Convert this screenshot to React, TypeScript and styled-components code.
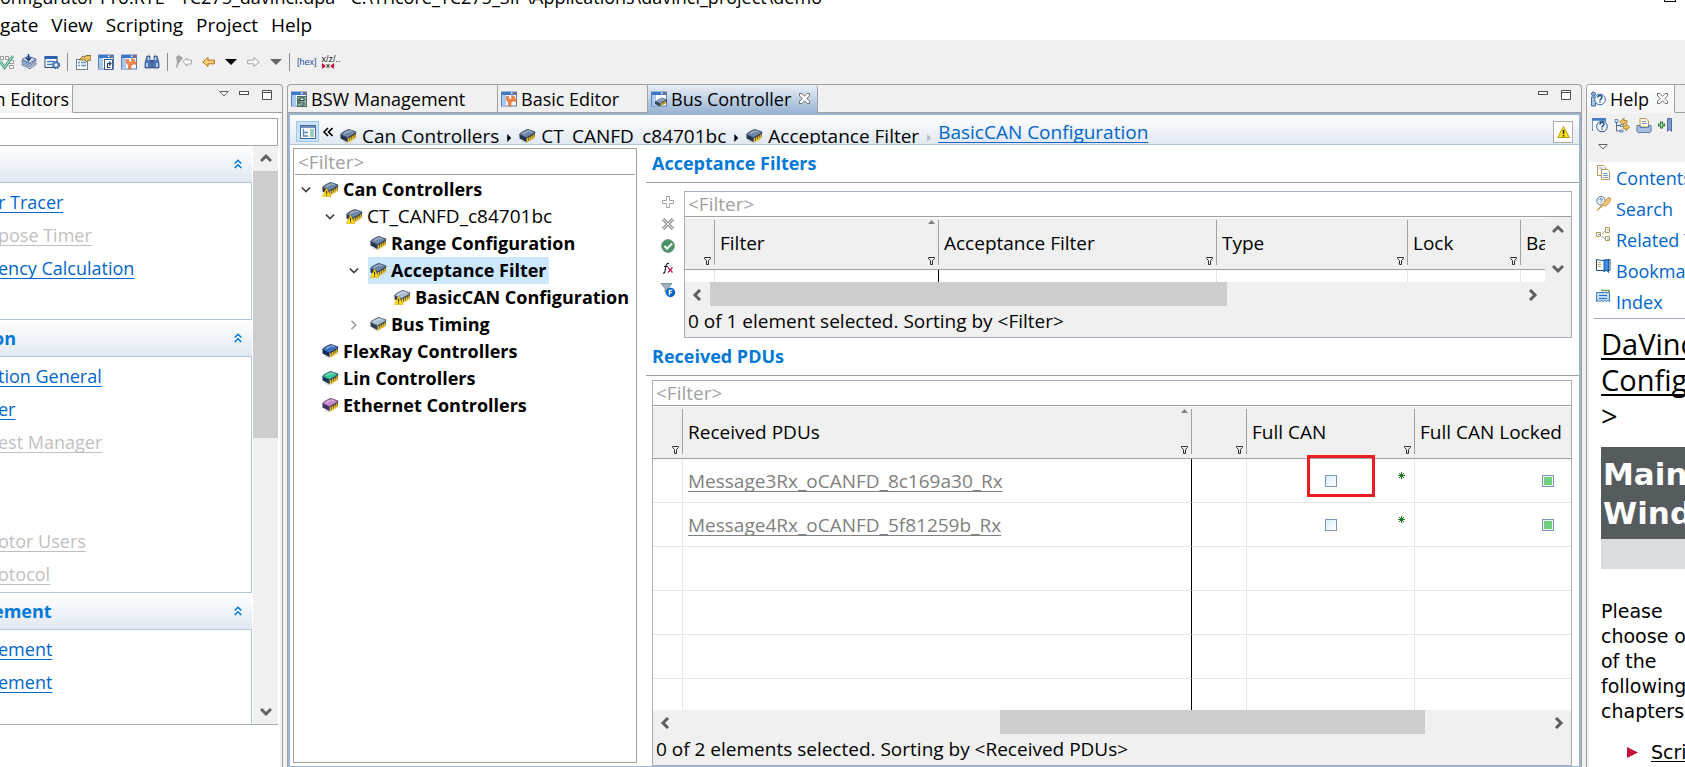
import React from 'react';
import styled, { createGlobalStyle, css } from 'styled-components';

const GlobalStyle = createGlobalStyle`
  * { box-sizing: border-box; }
  body { margin: 0; background: #f0f0f0; }
  body, button, input, table {
    font-family: "Open Sans", "Noto Sans", sans-serif;
    font-size: 19px;
    line-height: 24px;
    color: #000;
  }
  button { padding: 0; border: 0; background: none; display: flex; align-items: center; justify-content: center; }
  svg { display: block; flex: none; }
  h2, h3, p, ul { margin: 0; padding: 0; font-weight: inherit; }
  ul { list-style: none; }
`;

/* ---------- window ---------- */

const Window = styled.div`
  display: flex;
  flex-direction: column;
  height: 100vh;
  overflow: hidden;
  background: #f0f0f0;
`;
const TitleBar = styled.header`
  display: flex;
  align-items: flex-end;
  justify-content: space-between;
  height: 9px;
  padding-right: 9px;
  background: #fff;
  font-size: 18px;
  overflow: hidden;
  white-space: nowrap;
`;
const MaximizeButton = styled.button`
  width: 12px;
  height: 12px;
  margin-bottom: 7px;
  border: 1px solid #000;
`;
const MenuBar = styled.nav`
  display: flex;
  align-items: flex-start;
  gap: 13px;
  height: 31px;
  padding-top: 4px;
  background: #fff;
`;
const ToolBar = styled.div`
  display: flex;
  align-items: center;
  height: 44px;
`;
const ToolGroup = styled.div<{ $gap: number }>`
  display: flex;
  align-items: center;
  gap: ${p => p.$gap}px;
`;
const ToolSeparator = styled.span`
  width: 1px;
  height: 18px;
  margin: 0 7px;
  background: #8c8c8c;
`;
const Workbench = styled.main`
  flex: 1;
  min-height: 0;
  display: flex;
  gap: 4px;
`;

/* ---------- panels and tabs ---------- */

const PanelBox = styled.section`
  display: flex;
  flex-direction: column;
  min-width: 0;
  border-top: 1px solid #a0a0a0;
`;
const LeftPanel = styled(PanelBox)`
  width: 283px;
  flex: none;
  border-right: 1px solid #a0a0a0;
  border-top-right-radius: 4px;
`;
const EditorPanel = styled(PanelBox)`
  flex: 1;
  border-left: 1px solid #a0a0a0;
  border-right: 1px solid #a0a0a0;
  border-radius: 4px 4px 0 0;
`;
const HelpPanel = styled(PanelBox)`
  width: 99px;
  flex: none;
  overflow: hidden;
  border-left: 1px solid #a0a0a0;
  border-top-left-radius: 4px;
`;
const TabStrip = styled.div`
  display: flex;
  flex: none;
  height: 28px;
  white-space: nowrap;
`;
const Tab = styled.div<{ $active?: boolean; $plain?: boolean; $cut?: boolean; $wide: number }>`
  display: flex;
  align-items: center;
  justify-content: ${p => (p.$cut ? 'flex-end' : 'flex-start')};
  gap: 4px;
  width: ${p => p.$wide}px;
  height: 28px;
  padding: 0 3px;
  font-size: 18px;
  overflow: hidden;
  border-right: 1px solid #a0a0a0;
  border-bottom: 1px solid #a0a0a0;
  ${p => p.$active && css`
    background: linear-gradient(#e9eff6, #9bb5d3);
    border-bottom-color: #9bb5d3;
    border-top-right-radius: 3px;
  `}
  ${p => p.$plain && css`
    background: linear-gradient(#fff, #f6f6f6);
    border-bottom-color: #f6f6f6;
  `}
  & > button { margin-left: 4px; }
`;
const TabFill = styled.div`
  flex: 1;
  display: flex;
  justify-content: flex-end;
  gap: 13px;
  padding: 5px 10px 0 0;
  border-bottom: 1px solid #a0a0a0;
`;
const StripButton = styled.button<{ $low?: boolean; $menu?: boolean }>`
  align-items: flex-start;
  width: 10px;
  height: 10px;
  padding-top: ${p => (p.$low ? 1 : 0)}px;
  margin-right: ${p => (p.$menu ? -3 : 0)}px;
`;

/* ---------- scrollbars ---------- */

const ScrollTrack = styled.div<{ $vertical?: boolean }>`
  display: flex;
  flex: none;
  flex-direction: ${p => (p.$vertical ? 'column' : 'row')};
  ${p => (p.$vertical ? 'width: 25px;' : 'height: 24px;')}
  background: #f0f0f0;
  & > button { flex: none; width: 25px; height: 25px; }
`;
const ScrollRun = styled.span<{ $part: number; $thumb?: boolean }>`
  flex: ${p => p.$part} 1 0;
  background: ${p => (p.$thumb ? '#cdcdcd' : 'transparent')};
`;

type Dir = 'up' | 'down' | 'left' | 'right';
const chevrons: Record<Dir, string> = {
  up: 'M1 8 L6 3 L11 8', down: 'M1 3 L6 8 L11 3',
  left: 'M8 1 L3 6 L8 11', right: 'M3 1 L8 6 L3 11',
};
const Chevron = ({ dir, size = 12, color = '#606060', weight = 3 }: { dir: Dir; size?: number; color?: string; weight?: number }) => (
  <svg width={size} height={size} viewBox="0 0 12 12" fill="none" stroke={color} strokeWidth={weight}><path d={chevrons[dir]} /></svg>
);
const ScrollBar = ({ vertical, before, thumb, after }: { vertical?: boolean; before: number; thumb: number; after: number }) => (
  <ScrollTrack $vertical={vertical}>
    <button aria-label="Scroll back"><Chevron dir={vertical ? 'up' : 'left'} /></button>
    <ScrollRun $part={before} />
    <ScrollRun $part={thumb} $thumb />
    <ScrollRun $part={after} />
    <button aria-label="Scroll forward"><Chevron dir={vertical ? 'down' : 'right'} /></button>
  </ScrollTrack>
);

/* ---------- left panel ---------- */

const LeftBody = styled.div`
  flex: 1;
  min-height: 0;
  display: flex;
  flex-direction: column;
  margin-right: 2px;
  padding: 5px 2px 42px 0;
  background: #fff;
`;
const SearchBox = styled.input`
  width: 100%;
  height: 28px;
  flex: none;
  border: 1px solid #a0a4a8;
  border-left: 0;
  outline: 0;
`;
const OutlineArea = styled.div`
  flex: 1;
  min-height: 0;
  display: flex;
  gap: 1px;
  border-bottom: 1px solid #a5adb8;
`;
const OutlineList = styled.div`
  flex: 1;
  min-width: 0;
  overflow: hidden;
`;
const GroupHead = styled.h2`
  display: flex;
  align-items: center;
  justify-content: space-between;
  height: 37px;
  padding-right: 10px;
  border-bottom: 1px solid #b4c5db;
  background: linear-gradient(#fff, #e1e8f2);
  font-size: 18px;
  font-weight: 700;
  color: #0078d7;
  & > span { margin-left: -7px; }
`;
const GroupBody = styled.ul`
  padding-top: 4px;
  border-right: 1px solid #b4c5db;
  border-bottom: 1px solid #b4c5db;
  font-size: 18px;
  white-space: nowrap;
`;
const GroupItem = styled.li`
  height: 33px;
  margin-left: -2px;
  line-height: 31px;
`;
const TextLink = styled.a<{ $off?: boolean }>`
  color: ${p => (p.$off ? '#bfbfbf' : '#0066cc')};
  text-decoration: underline;
  text-underline-offset: 3px;
  text-decoration-thickness: 1px;
  text-decoration-skip-ink: none;
`;

type Entry = { text: string; off?: boolean } | null;
const groups: { title: string; items: Entry[] }[] = [
  { title: '', items: [{ text: 'r Tracer' }, { text: 'pose Timer', off: true }, { text: 'ency Calculation' }, null] },
  {
    title: 'on',
    items: [{ text: 'tion General' }, { text: 'er' }, { text: 'est Manager', off: true }, null, null, { text: 'otor Users', off: true }, { text: 'otocol', off: true }],
  },
  { title: 'ement', items: [{ text: 'ement' }, { text: 'ement' }, null] },
];

const DoubleUp = () => (
  <svg width="8" height="10" viewBox="0 0 8 10" fill="none" stroke="#0078d7" strokeWidth="1.5"><path d="M.7 4.5 4 1.2l3.3 3.3M.7 9 4 5.7 7.3 9" /></svg>
);

/* ---------- editor ---------- */

const EditorBody = styled.div`
  flex: 1;
  min-height: 0;
  display: flex;
  flex-direction: column;
  border: 2px solid #9bb5d3;
  border-bottom-width: 1px;
  background: #fff;
`;
const Breadcrumb = styled.nav`
  display: flex;
  flex: none;
  height: 30px;
  padding: 0 6px;
  border-bottom: 1px solid #b4c5db;
  background: linear-gradient(#fff, #e0e8f1);
  overflow: hidden;
  white-space: nowrap;
`;
const TreeToggle = styled.button`
  flex: none;
  width: 23px;
  height: 21px;
  margin-top: 6px;
  border: 1px solid #99c9f5;
  background: #cce4fb;
`;
const Crumb = styled.span`
  display: flex;
  align-items: center;
  gap: 5px;
  height: 24px;
  margin: 9px 8px 0 7px;
`;
const CrumbArrow = styled.span<{ $off?: boolean }>`
  margin: 19px 1px 0 0;
  width: 4px;
  height: 8px;
  background: ${p => (p.$off ? '#b8bcc2' : '#000')};
  clip-path: polygon(0 0, 100% 50%, 0 100%);
`;
const CrumbLink = styled(TextLink)`
  margin: 5px 0 0 6px;
`;
const WarnButton = styled.button`
  width: 20px;
  height: 22px;
  margin: 6px 0 0 auto;
  border: 1px solid #adadad;
  background: #fff;
`;
const Split = styled.div`
  flex: 1;
  min-height: 0;
  display: flex;
  gap: 9px;
`;
const TreePane = styled.aside`
  flex: none;
  width: 344px;
  margin: 3px 0 3px 3px;
  padding: 0 1px;
  border: 1px solid #a0a0a0;
`;
const FilterInput = styled.input`
  display: block;
  flex: none;
  width: 100%;
  height: 26px;
  padding: 0 3px;
  border: 0;
  border-bottom: 1px solid #a0a0a0;
  outline: 0;
  &::placeholder { color: #a0a0a0; opacity: 1; }
`;
const TreeList = styled.ul`
  padding-top: 1px;
`;
const TreeRow = styled.li<{ $level: number }>`
  display: flex;
  align-items: center;
  height: 27px;
  padding-left: ${p => p.$level * 24 + 5}px;
`;
const Expander = styled.button`
  width: 12px;
  height: 12px;
  margin-right: 8px;
`;
const TreeLabel = styled.span<{ $selected?: boolean; $bold?: boolean }>`
  display: flex;
  align-items: center;
  gap: 4px;
  height: 27px;
  padding: 0 2px 2px;
  background: ${p => (p.$selected ? '#cce8ff' : 'transparent')};
  font-size: ${p => (p.$bold ? 18 : 19)}px;
  font-weight: ${p => (p.$bold ? 700 : 400)};
  white-space: nowrap;
`;
const Detail = styled.div`
  flex: 1;
  min-width: 0;
  display: flex;
  flex-direction: column;
`;
const SectionTitle = styled.h2`
  flex: none;
  height: 38px;
  padding: 6px 0 0 6px;
  border-bottom: 1px solid #a0a0a0;
  font-size: 18px;
  font-weight: 700;
  color: #0078d7;
`;
const FilterSection = styled.div`
  display: flex;
  gap: 8px;
  padding: 8px 7px 0 14px;
`;
const SideTools = styled.div`
  display: flex;
  flex-direction: column;
  gap: 6px;
  padding-top: 3px;
  & > button { width: 16px; height: 16px; }
`;
const ReceivedSection = styled.div`
  flex: 1;
  min-height: 0;
  display: flex;
  padding: 4px 7px 0 6px;
`;
const TableBox = styled.div`
  flex: 1;
  min-width: 0;
  display: flex;
  flex-direction: column;
  border: 1px solid #a5b1be;
  background: #f0f0f0;
`;
const TableFilter = styled(FilterInput)`
  height: 25px;
`;
const TableView = styled.div`
  flex: 1;
  min-height: 0;
  min-width: 0;
  overflow: hidden;
  border-top: 1px solid #fff;
  background: #fff;
`;
const TableLine = styled.div`
  display: flex;
  height: 65px;
`;
const ArrowColumn = styled.div`
  display: flex;
  flex-direction: column;
  justify-content: space-between;
  width: 26px;
  & > button { width: 26px; height: 26px; }
`;
const ScrollLine = styled.div`
  padding-right: 26px;
`;
const Footer = styled.p`
  height: 31px;
  padding: 3px 3px 0;
`;
const Grid = styled.table`
  table-layout: fixed;
  border-collapse: separate;
  border-spacing: 0;
`;
const HeadCell = styled.th`
  height: 52px;
  padding: 2px 0 4px;
  border-bottom: 1px solid #a0a0a0;
  background: #f0f0f0;
  font-weight: 400;
  text-align: left;
`;
const HeadInner = styled.div<{ $open?: boolean }>`
  position: relative;
  display: flex;
  align-items: center;
  height: 45px;
  padding-left: 5px;
  border-right: ${p => (p.$open ? '0' : '1px solid #a0a0a0')};
  white-space: nowrap;
`;
const FunnelMark = styled.span`
  position: absolute;
  right: 3px;
  bottom: 0;
`;
const SortMark = styled.span`
  position: absolute;
  right: 3px;
  top: 0;
`;
const Cell = styled.td<{ $dark?: boolean; $center?: boolean }>`
  position: relative;
  height: 44px;
  padding: 0 5px;
  border-right: 1px solid ${p => (p.$dark ? '#000' : '#e6e6e6')};
  border-bottom: 1px solid #e6e6e6;
  text-align: ${p => (p.$center ? 'center' : 'left')};
  white-space: nowrap;
`;
const PduLink = styled(TextLink)`
  color: #808080;
`;
const Check = styled.input<{ $locked?: boolean }>`
  appearance: none;
  display: block;
  width: 12px;
  height: 12px;
  margin: 0 auto;
  border: 1px solid #7f93b5;
  background: linear-gradient(135deg, #d9effa, #fff);
  ${p => p.$locked && css`
    background: #70d080;
    box-shadow: inset 0 0 0 1px #e9f6fb;
  `}
`;
const Changed = styled.span`
  position: absolute;
  right: 9px;
  top: 13px;
`;
const Highlight = styled.span`
  position: absolute;
  left: 60px;
  top: -4px;
  width: 68px;
  height: 42px;
  border: 3px solid #ed1c24;
`;

const Funnel = () => (
  <svg width="7" height="8" viewBox="0 0 7 8" fill="none" stroke="#303030"><path d="M.5.5h6v1L4.500 3.500v4h-2v-4L.5 1.500z" /></svg>
);
const SortUp = () => (
  <svg width="7" height="4" viewBox="0 0 7 4"><path d="M3.500 0 7 4H0z" fill="#808080" /></svg>
);

type Column = { title: string; width: number; funnel?: boolean; sorted?: boolean; open?: boolean };
const filterColumns: Column[] = [
  { title: '', width: 30, funnel: true },
  { title: 'Filter', width: 224, funnel: true, sorted: true },
  { title: 'Acceptance Filter', width: 278, funnel: true },
  { title: 'Type', width: 191, funnel: true },
  { title: 'Lock', width: 113, funnel: true },
  { title: 'Base', width: 120, open: true },
];
const pduColumns: Column[] = [
  { title: '', width: 30, funnel: true },
  { title: 'Received PDUs', width: 509, funnel: true, sorted: true },
  { title: '', width: 55, funnel: true },
  { title: 'Full CAN', width: 168, funnel: true },
  { title: 'Full CAN Locked', width: 266, open: true },
];
const pdus = ['Message3Rx_oCANFD_8c169a30_Rx', 'Message4Rx_oCANFD_5f81259b_Rx'];

const GridHead = ({ columns }: { columns: Column[] }) => (
  <>
    <colgroup>{columns.map((c, i) => <col key={i} width={c.width} />)}</colgroup>
    <thead>
      <tr>
        {columns.map((c, i) => (
          <HeadCell key={i} scope="col">
            <HeadInner $open={c.open}>
              {c.title}
              {c.sorted && <SortMark><SortUp /></SortMark>}
              {c.funnel && <FunnelMark><Funnel /></FunnelMark>}
            </HeadInner>
          </HeadCell>
        ))}
      </tr>
    </thead>
  </>
);
const totalWidth = (columns: Column[]) => columns.reduce((sum, c) => sum + c.width, 0);

/* ---------- icons ---------- */

const chipTones = { can: ['#6f87a6', '#27344f'], steel: ['#a9bfcf', '#33415a'], flexray: ['#3f74bf', '#182a5c'], lin: ['#3cc79a', '#1c3550'], ethernet: ['#c58bcb', '#41305f'] };
type Tone = keyof typeof chipTones;
const Chip = ({ tone = 'can', warn }: { tone?: Tone; warn?: boolean }) => {
  const [top, side] = chipTones[tone];
  return (
    <svg width="17" height="16" viewBox="0 0 17 16">
      <path d="M2 13 7 15.500 16.500 10 15 9z" fill="#b9bcc0" opacity=".6" />
      <path d="M.5 6.500 7.500 9.500v4.500L.5 10.500z" fill={side} />
      <path d="M7.500 9.500 16 4.500v4L7.500 14z" fill="#514a35" />
      <path d="M.5 6.500C1 5 7 1.800 9 1.500l7 2.500v.8L7.500 9.800z" fill={top} stroke={side} strokeWidth=".8" />
      <path d="M4 5.500 9.500 2.800l3 1" stroke="#fff" strokeWidth="1.200" fill="none" opacity=".45" />
      <path d="M8.600 10v4.500M10.700 9v4.300M12.800 7.800v4.200M14.900 6.600v4" stroke="#f0c419" strokeWidth="1.300" />
      {warn && (
        <>
          <path d="M4.500 7 9 15.500H.3z" fill="#ffdc14" stroke="#c9a000" strokeWidth=".5" />
          <path d="M4.600 9.800v3M4.600 13.500v1.100" stroke="#222" strokeWidth="1" />
        </>
      )}
    </svg>
  );
};
const WindowIcon = ({ kind }: { kind: 'tree' | 'basic' | 'bus' | 'link' }) => (
  <svg width="16" height="16" viewBox="0 0 16 16">
    <rect x=".5" y="1" width="15" height="14" fill="#fdfdff" stroke="#5b7fb5" />
    <rect x="1" y="1" width="14" height="3" fill="#3b78c9" />
    <rect x="10" y="1.500" width="1.500" height="1.500" fill="#fff" />
    <rect x="12.500" y="1.500" width="2" height="1.500" fill="#e0532f" />
    <rect x="1" y="4" width="4" height="11" fill="#a9c8ec" />
    {kind === 'tree' && (<><rect x="6.500" y="5.500" width="9" height="10" fill="#8fb5a0" stroke="#476f60" /><path d="M9 7h4v2.500h-4zM9 12h4v2h-4M8 8v5" stroke="#1f3d38" fill="#fff" /></>)}
    {kind === 'basic' && (<path d="M5.500 5.500 7.500 5l.5 3 1.500.5L11 6l-.5-1.500 3 1L14 8l1.500 1v1.500l-3-.5L10 11.500V15H7.500v-3.500L5.500 9z" fill="#f08548" stroke="#c95a22" strokeWidth=".5" />)}
    {kind === 'link' && (<><rect x="6.500" y="5.500" width="8" height="10" fill="#fff" stroke="#3f5c8f" /><path d="M12.500 13.500H9.500V9.500h3M11 7.500l2 2-2 2" stroke="#27457c" strokeWidth="1.200" fill="none" /></>)}
    {kind === 'bus' && (<><path d="M4 10.500 11 6.500l5 2v2.500L9 15.500l-5-2.500z" fill="#33435f" /><path d="M4.500 10.300 11 6.800l4.500 1.700L9 12z" fill="#8aa0ba" /><path d="M10 12v3M12 11v3M14 10v3" stroke="#f0c419" strokeWidth="1.200" /></>)}
  </svg>
);
const CloseMark = () => (
  <svg width="11" height="11" viewBox="0 0 11 11" fill="#fff" stroke="#606060" strokeWidth=".9"><path d="M.5.5h2.300l2.700 2.700L8.200.5h2.300v2.300L7.800 5.500l2.700 2.700v2.300H8.200L5.500 7.800l-2.700 2.700H.5V8.200l2.700-2.700L.5 2.800z" /></svg>
);
const MenuMark = () => (
  <svg width="10" height="6" viewBox="0 0 10 6" fill="#fff" stroke="#606060"><path d="M.8.5h8.400L5 5z" /></svg>
);
const MinMark = () => (
  <svg width="10" height="4" viewBox="0 0 10 4" fill="#fff" stroke="#505050"><rect x=".5" y=".5" width="9" height="3" /></svg>
);
const MaxMark = () => (
  <svg width="10" height="10" viewBox="0 0 10 10" fill="#fff" stroke="#505050"><path d="M.5.5h9v9h-9zM.5 2.500h9" /></svg>
);
const PanelButtons = ({ menu }: { menu?: boolean }) => (
  <>
    {menu && <StripButton $low $menu aria-label="View menu"><MenuMark /></StripButton>}
    <StripButton $low aria-label="Minimize"><MinMark /></StripButton>
    <StripButton aria-label="Maximize"><MaxMark /></StripButton>
  </>
);
const Svg = ({ children, w = 16, h = 16 }: { children: React.ReactNode; w?: number; h?: number }) => (
  <svg width={w} height={h} viewBox={`0 0 ${w} ${h}`} fill="none">{children}</svg>
);
const ValidateIcon = () => (
  <Svg w={14}><path d="M.5 2.500h3v3h-3zM9.500 6.500h4v3h-4zM9.500 11.500h4v3h-4zM5.500 2.500h3v3h-3z" fill="#fff" stroke="#999" /><path d="m0 7 4.500 6.500L13 2" stroke="#3f9c80" strokeWidth="2.800" /><path d="m0 7 4.500 6.500L13 2" stroke="#c6efe0" /></Svg>
);
const LayersIcon = () => (
  <Svg><path d="m1 11 8 3.800 6-4.300V8.800L9 13 1 9.500z" fill="#fff" stroke="#4d6797" strokeWidth=".9" /><path d="m1 8 8 3.500 6-4.500V5.500L9 10 1 6.500z" fill="#eef3fa" stroke="#4d6797" strokeWidth=".9" /><path d="m1 5.500 6-3.300 8 2.800-6 4.300z" fill="#cfdcee" stroke="#4d6797" strokeWidth=".9" /><path d="M7.500 0v5M5 3.500 7.500 6.500 10 3.500" stroke="#1c3f7a" strokeWidth="1.500" /></Svg>
);
const FormGearIcon = () => (
  <Svg><rect x="1" y="2.500" width="12" height="11" fill="#fff" stroke="#24487f" /><rect x="1" y="2" width="12" height="3" fill="#2c62ad" /><path d="M3 7.500h7M3 10.500h5" stroke="#3e7ac6" strokeWidth="1.500" /><circle cx="12" cy="11" r="3.200" fill="#7ea5d8" stroke="#27508f" strokeWidth="1.600" strokeDasharray="1.700 .8" /><circle cx="12" cy="11" r="1.200" fill="#fff" /></Svg>
);
const PropertiesIcon = () => (
  <Svg><rect x="1.500" y="5.500" width="11" height="10" fill="#fff" stroke="#75808f" /><path d="M3 8.500h2M3 11.500h2M6 8.500h5M6 11.500h5" stroke="#5d90cc" strokeWidth="1.300" /><path d="m4 6 4-4 2 1 1-1.500h5V6l-3 .5-1 1.500-2-2z" fill="#e3bf62" stroke="#7d6428" strokeWidth=".9" /></Svg>
);
const BinocularsIcon = () => (
  <Svg><path d="M3 2h3v4l1.500 1.500V14H1V9zM13 2h-3v4L8.500 7.500V14H15V9z" fill="#4f77b3" stroke="#2d4f88" strokeWidth=".8" /><path d="M3 9v4M13 9v4M4.500 3v3M11.500 3v3" stroke="#d3e2f7" strokeWidth="1.500" /><path d="M7 6h2v2H7z" fill="#27457c" /></Svg>
);
const LastEditIcon = () => (
  <Svg w={17}><path d="M1 3 4 1l4 3-4 5-2 5-1-1 1-5z" fill="#a3a3a3" /><path d="M8 7.500 12 4v2h4.500v4H12v2z" fill="#fff" stroke="#a5a5a5" /></Svg>
);
const BackIcon = () => (
  <Svg w={13}><path d="M.8 8 6 3.500v2.700h6.400v3.600H6v2.700z" fill="#ffcf7d" stroke="#b5701c" /></Svg>
);
const ForwardIcon = () => (
  <Svg w={13}><path d="M12.200 8 7 3.500v2.700H.6v3.600H7v2.700z" fill="#f8f8f8" stroke="#a5a5a5" /></Svg>
);
const DropMark = ({ color = '#000' }: { color?: string }) => (
  <Svg w={12} h={6}><path d="M0 0h12L6 6z" fill={color} /></Svg>
);
const HexLabel = styled.span`
  font-family: "Liberation Sans", sans-serif;
  font-size: 9px;
  line-height: 16px;
  color: #1d4e9e;
`;
const SizeLabel = styled.span`
  display: flex;
  flex-direction: column;
  font-family: "Liberation Sans", sans-serif;
  font-size: 9px;
  line-height: 8px;
  color: #222;
`;
const AddIcon = () => (<Svg w={14} h={14}><path d="M5.500 1.500h3v4h4v3h-4v4h-3v-4h-4v-3h4z" fill="#fff" stroke="#a0a0a0" /></Svg>);
const RemoveIcon = () => (<Svg w={14} h={14}><path d="m2 2 10 10M12 2 2 12" stroke="#9a9a9a" strokeWidth="3.200" /><path d="m2 2 10 10M12 2 2 12" stroke="#e8e8e8" strokeWidth="1" /></Svg>);
const OkIcon = () => (<Svg w={14} h={14}><circle cx="7" cy="7" r="6.500" fill="#469461" stroke="#8f9a93" /><path d="m3.500 7 2.600 2.800L11 4.500" stroke="#fff" strokeWidth="2" /></Svg>);
const FxIcon = () => (<Svg w={14} h={14}><path d="M2 12c2 .6 2-1.500 2.500-4.500S5.300 1.800 8 2.500M3 5.500h4" stroke="#222" strokeWidth="1.200" /><path d="m7 6.500 4.500 5M11.500 6.500 7 11.500" stroke="#b8103f" strokeWidth="1.200" /></Svg>);
const FilterFIcon = () => (<Svg><path d="M1 1.500h11L8 6.500V12l-3-2V6.500z" fill="#9fb3bf" stroke="#74848f" strokeWidth=".8" /><circle cx="10.500" cy="10.500" r="4.700" fill="#0a63c9" /><path d="M9.300 13.200V8.300h3M9.300 10.600h2.500" stroke="#fff" strokeWidth="1.200" /></Svg>);
const TreeWindowIcon = () => (<Svg><rect x=".5" y="1.500" width="15" height="13" fill="#fff" stroke="#41699f" /><path d="M1 3h14" stroke="#41699f" strokeWidth="1.500" /><rect x="10" y="5" width="4" height="8" fill="#9fcdb4" /><path d="M3.500 5v7H8M3.500 8.500H8" stroke="#5887c0" strokeWidth="1.300" /></Svg>);
const WarnIcon = () => (<Svg w={13} h={14}><path d="M6.500 1.500 12.300 12.500H.7z" fill="#ffe21a" stroke="#b59a10" /><path d="M6.500 5v4M6.500 10v1.500" stroke="#222" strokeWidth="1.500" /></Svg>);
const question = <path d="M8 6.600c0-2.800 4-2.700 4-.3 0 1.600-2 1.500-2 3.200M10 10.500v1.300" stroke="#1d4a85" strokeWidth="1.400" />;
const HelpIcon = () => (<Svg><circle cx="3.500" cy="3" r="2" fill="#8fb0d6" stroke="#3d6aa3" /><path d="M1.500 6h4v9h-4z" fill="#a9c5e5" stroke="#3d6aa3" /><circle cx="10" cy="8.500" r="5.300" fill="#f2f7fd" stroke="#3d6aa3" />{question}</Svg>);
const HelpWindowIcon = () => (<Svg><path d="M.5 14V1.500h13V5" stroke="#6f8fbd" fill="#fff" /><path d="M0 2.500h14" stroke="#3b78c9" strokeWidth="2.500" /><circle cx="10" cy="9.500" r="5.300" fill="#f2f7fd" stroke="#27568f" /><g transform="translate(0 1)">{question}</g></Svg>);
const SyncTreeIcon = () => (<Svg><path d="M2.500 3v11H6M2.500 8.500H6" stroke="#54698a" /><path d="M1 2.500h3v3H1zM6 7.500h3v2H6zM6 13h3v2H6z" fill="#cfe0f5" stroke="#4d74a8" strokeWidth=".8" /><path d="m6 5 4-4v2.500h3V6h-3v2zM15.500 10 12 14v-2.500H9.500V9H12V7z" fill="#f0c55c" stroke="#a3761b" strokeWidth=".8" /></Svg>);
const PrintIcon = () => (<Svg><path d="M4 1.500h6l2.500 2.500v6H4z" fill="#fff8e3" stroke="#b39b5d" /><path d="M6 4.500h4M6 6.500h5" stroke="#7ba0cf" /><path d="M1 8.500h3v2h8.500v-2H15V14l-1 1.500H2L1 14z" fill="#a8c0e4" stroke="#5a79a9" /></Svg>);
const AddBookmarkIcon = () => (<Svg><path d="M3.500 4.500v7M0 8h7" stroke="#2f7a3a" strokeWidth="3" /><path d="M3.500 5.500v5M1 8h5" stroke="#a5dca0" strokeWidth="1" /><path d="M9.500 1.500h4v13l-2-2.500-2 2.500z" fill="#7d9bcb" stroke="#4f6ea3" /></Svg>);
const ContentsIcon = () => (<Svg w={15} h={15}><path d="M1.500.5h6l2 2v8h-8z" fill="#fff" stroke="#b59a55" /><path d="M5.500 4.500h6l2 2v8h-8z" fill="#fff" stroke="#b59a55" /><path d="M3 3h4M7 8.500h4.500M7 10.500h5M7 12.500h5" stroke="#7ba0cf" /></Svg>);
const SearchIcon = () => (<Svg w={15} h={15}><circle cx="5" cy="4.800" r="4.200" fill="#f2f7fd" stroke="#5a738f" /><g transform="translate(-1 0) scale(.6)">{question}</g><path d="m1 14.500 7-8L12 1.500l2.500.5-.5 4L9.500 10l-2-.5z" fill="#f3c673" stroke="#b88b35" strokeWidth=".8" /></Svg>);
const RelatedIcon = () => (<Svg w={15} h={15}><path d="M.5 5.500h4v4h-4zM9.500.5h4v5h-4zM9.500 9.500h4v4h-4z" fill="#fff" stroke="#b59a55" /><path d="m6 7 3-3M6 9l3 3M2 7.500h2M11 3h2M11 12h2" stroke="#8ba5c7" /></Svg>);
const BookmarksIcon = () => (<Svg w={15} h={15}><path d="M.5 1.500 6 2.500l8-1v11H.5z" fill="#fff" stroke="#27457c" /><path d="M2 4.500h3M2 6.500h3M2 8.500h3" stroke="#c9ae6a" /><path d="M8 2h4.500v12.500L10.300 12 8 14z" fill="#3c8fdd" stroke="#1b5fa8" /></Svg>);
const IndexIcon = () => (<Svg w={15} h={15}><path d="M.5 3.500h13v9l-1.600-1-1.600 1-1.600-1-1.700 1-1.600-1-1.600 1-1.600-1-1.700 1z" fill="#bcd9f5" stroke="#3f7fc4" /><path d="M3 6.500h8M3 9.500h8" stroke="#2f6cb5" /><path d="M5 1.500h8v2" stroke="#7b9d4d" strokeWidth="1.500" /></Svg>);

/* ---------- help ---------- */

const HelpTools = styled.div`
  display: flex;
  flex-wrap: wrap;
  align-content: flex-start;
  gap: 10px 6px;
  height: 49px;
  flex: none;
  padding: 4px 4px 0 5px;
`;
const MenuLine = styled.div`
  flex: 1 0 100%;
  padding-left: 6px;
`;
const HelpBody = styled.div`
  flex: 1;
  min-height: 0;
  overflow: hidden;
  margin-left: 2px;
  background: #fff;
`;
const HelpLinks = styled.ul`
  margin-left: 5px;
  padding: 1px 0 0 2px;
  border-bottom: 1px solid #a5b1be;
`;
const HelpLinkRow = styled.li`
  display: flex;
  gap: 5px;
  height: 31px;
  font-size: 18px;
  & > svg { margin-top: 2px; }
  & > a { padding-top: 1px; color: #0066cc; text-decoration: none; white-space: nowrap; line-height: 28px; }
`;
const HelpPage = styled.article`
  margin-left: 12px;
  font-family: "DejaVu Sans", sans-serif;
`;
const HelpPath = styled.p`
  height: 128px;
  padding-top: 7px;
  font-family: "Open Sans", "Noto Sans", sans-serif;
  font-size: 29px;
  line-height: 36px;
  & > a { color: #000; text-underline-offset: 3px; text-decoration-thickness: 2px; text-decoration-skip-ink: none; }
`;
const HelpHeading = styled.h3`
  height: 122px;
  padding: 8px 0 0 2px;
  border-bottom: 30px solid #d9dde0;
  background: #565b5e;
  color: #fff;
  font-size: 31px;
  font-weight: 700;
  line-height: 39px;
`;
const HelpText = styled.p`
  width: 120px;
  padding: 30px 0 16px;
  font-size: 19px;
  line-height: 25px;
`;
const Topic = styled.div`
  display: flex;
  align-items: center;
  gap: 13px;
  padding-left: 26px;
  font-size: 19px;
  white-space: nowrap;
  & > a { color: #000; text-underline-offset: 2px; }
`;

const helpLinks: [string, React.ReactNode][] = [
  ['Contents', <ContentsIcon />], ['Search', <SearchIcon />], ['Related Topics', <RelatedIcon />],
  ['Bookmarks', <BookmarksIcon />], ['Index', <IndexIcon />],
];

type Node = { text: string; level: number; tone?: Tone; warn?: boolean; open?: boolean; closed?: boolean; selected?: boolean; light?: boolean };
const nodes: Node[] = [
  { text: 'Can Controllers', level: 0, open: true, warn: true },
  { text: 'CT_CANFD_c84701bc', level: 1, open: true, warn: true, light: true },
  { text: 'Range Configuration', level: 2 },
  { text: 'Acceptance Filter', level: 2, open: true, warn: true, selected: true },
  { text: 'BasicCAN Configuration', level: 3, tone: 'steel', warn: true },
  { text: 'Bus Timing', level: 2, tone: 'steel', closed: true },
  { text: 'FlexRay Controllers', level: 0, tone: 'flexray' },
  { text: 'Lin Controllers', level: 0, tone: 'lin' },
  { text: 'Ethernet Controllers', level: 0, tone: 'ethernet' },
];
const crumbs = ['Can Controllers', 'CT_CANFD_c84701bc', 'Acceptance Filter'];

export default function App() {
  return (
    <Window>
      <GlobalStyle />
      <TitleBar>
        <span>onfigurator Pro.RTE - TC275_davinci.dpa - C:\Tricore_TC275_SIP\Applications\davinci_project\demo</span>
        <MaximizeButton aria-label="Maximize window" />
      </TitleBar>
      <MenuBar>
        {['gate', 'View', 'Scripting', 'Project', 'Help'].map(m => <button key={m}>{m}</button>)}
      </MenuBar>
      <ToolBar>
        <ToolGroup $gap={7}>
          <button aria-label="Validate"><ValidateIcon /></button>
          <button aria-label="Layers"><LayersIcon /></button>
          <button aria-label="Settings"><FormGearIcon /></button>
        </ToolGroup>
        <ToolSeparator />
        <ToolGroup $gap={7}>
          <button aria-label="Properties"><PropertiesIcon /></button>
          <button aria-label="BSW Management"><WindowIcon kind="link" /></button>
          <button aria-label="Basic Editor"><WindowIcon kind="basic" /></button>
          <button aria-label="Find"><BinocularsIcon /></button>
        </ToolGroup>
        <ToolSeparator />
        <ToolGroup $gap={10}>
          <button aria-label="Last edit"><LastEditIcon /></button>
          <button aria-label="Back"><BackIcon /></button>
          <button aria-label="Back history"><DropMark /></button>
          <button aria-label="Forward"><ForwardIcon /></button>
          <button aria-label="Forward history"><DropMark color="#666" /></button>
        </ToolGroup>
        <ToolSeparator />
        <ToolGroup $gap={5}>
          <button><HexLabel>[hex]</HexLabel></button>
          <button><SizeLabel><span>x/z/..</span><Svg w={12} h={6}><path d="M0 0 4 3 0 6zM12 0 8 3l4 3z" fill="#c4123f" /><path d="m4.500 1 3 4M7.500 1l-3 4" stroke="#333" /></Svg></SizeLabel></button>
        </ToolGroup>
      </ToolBar>

      <Workbench>
        <LeftPanel>
          <TabStrip>
            <Tab $plain $cut $wide={73}>n Editors</Tab>
            <TabFill><PanelButtons menu /></TabFill>
          </TabStrip>
          <LeftBody>
            <SearchBox aria-label="Search editors" />
            <OutlineArea>
              <OutlineList>
                {groups.map((g, i) => (
                  <section key={i}>
                    <GroupHead><span>{g.title}</span><DoubleUp /></GroupHead>
                    <GroupBody>
                      {g.items.map((it, j) => <GroupItem key={j}>{it && <TextLink href="#" $off={it.off}>{it.text}</TextLink>}</GroupItem>)}
                    </GroupBody>
                  </section>
                ))}
              </OutlineList>
              <ScrollBar vertical before={0} thumb={266} after={260} />
            </OutlineArea>
          </LeftBody>
        </LeftPanel>

        <EditorPanel>
          <TabStrip>
            <Tab $wide={210}><WindowIcon kind="tree" />BSW Management</Tab>
            <Tab $wide={150}><WindowIcon kind="basic" />Basic Editor</Tab>
            <Tab $active $wide={170}><WindowIcon kind="bus" />Bus Controller<button aria-label="Close"><CloseMark /></button></Tab>
            <TabFill><PanelButtons /></TabFill>
          </TabStrip>
          <EditorBody>
            <Breadcrumb>
              <TreeToggle aria-label="Toggle tree"><TreeWindowIcon /></TreeToggle>
              <Svg w={14} h={32}><path d="m9 13-4 4 4 4M13.500 13l-4 4 4 4" stroke="#000" strokeWidth="1.600" /></Svg>
              {crumbs.map((c, i) => (
                <React.Fragment key={c}>
                  <Crumb><Chip />{c}</Crumb>
                  <CrumbArrow $off={i === 2} />
                </React.Fragment>
              ))}
              <CrumbLink href="#">BasicCAN Configuration</CrumbLink>
              <WarnButton aria-label="Warnings"><WarnIcon /></WarnButton>
            </Breadcrumb>
            <Split>
              <TreePane>
                <FilterInput placeholder="<Filter>" aria-label="Filter tree" />
                <TreeList>
                  {nodes.map(n => (
                    <TreeRow key={n.text} $level={n.level}>
                      <Expander aria-label="Expand" disabled={!n.open && !n.closed}>
                        {n.open && <Chevron dir="down" size={10} color="#404040" weight={2} />}
                        {n.closed && <Chevron dir="right" size={10} color="#a0a0a0" weight={2} />}
                      </Expander>
                      <TreeLabel $selected={n.selected} $bold={!n.light}><Chip tone={n.tone} warn={n.warn} />{n.text}</TreeLabel>
                    </TreeRow>
                  ))}
                </TreeList>
              </TreePane>
              <Detail>
                <SectionTitle>Acceptance Filters</SectionTitle>
                <FilterSection>
                  <SideTools>
                    <button aria-label="Add"><AddIcon /></button>
                    <button aria-label="Remove"><RemoveIcon /></button>
                    <button aria-label="Apply"><OkIcon /></button>
                    <button aria-label="Formula"><FxIcon /></button>
                    <button aria-label="Filter options"><FilterFIcon /></button>
                  </SideTools>
                  <TableBox>
                    <TableFilter placeholder="<Filter>" aria-label="Filter acceptance filters" />
                    <TableLine>
                      <TableView>
                        <Grid style={{ width: totalWidth(filterColumns) }}>
                          <GridHead columns={filterColumns} />
                          <tbody><tr>{filterColumns.map((c, i) => <Cell key={i} $dark={c.sorted} />)}</tr></tbody>
                        </Grid>
                      </TableView>
                      <ArrowColumn>
                        <button aria-label="Scroll up"><Chevron dir="up" /></button>
                        <button aria-label="Scroll down"><Chevron dir="down" /></button>
                      </ArrowColumn>
                    </TableLine>
                    <ScrollLine><ScrollBar before={0} thumb={516} after={293} /></ScrollLine>
                    <Footer>0 of 1 element selected. Sorting by &lt;Filter&gt;</Footer>
                  </TableBox>
                </FilterSection>
                <SectionTitle>Received PDUs</SectionTitle>
                <ReceivedSection>
                  <TableBox>
                    <TableFilter placeholder="<Filter>" aria-label="Filter received PDUs" />
                    <TableView>
                      <Grid style={{ width: totalWidth(pduColumns) }}>
                        <GridHead columns={pduColumns} />
                        <tbody>
                          {pdus.map((p, i) => (
                            <tr key={p}>
                              <Cell />
                              <Cell $dark><PduLink href="#">{p}</PduLink></Cell>
                              <Cell />
                              <Cell $center>
                                <Check type="checkbox" aria-label={`Full CAN ${p}`} />
                                <Changed><Svg w={7} h={7}><path d="M3.500 0v7M0 3.500h7M1 1l5 5M6 1 1 6" stroke="#1b7a1b" /></Svg></Changed>
                                {i === 0 && <Highlight />}
                              </Cell>
                              <Cell><Check type="checkbox" $locked aria-label={`Full CAN locked ${p}`} /></Cell>
                            </tr>
                          ))}
                          {[0, 1, 2, 3].map(r => <tr key={r}>{pduColumns.map((c, i) => <Cell key={i} $dark={c.sorted} />)}</tr>)}
                        </tbody>
                      </Grid>
                    </TableView>
                    <ScrollBar before={321} thumb={424} after={121} />
                    <Footer>0 of 2 elements selected. Sorting by &lt;Received PDUs&gt;</Footer>
                  </TableBox>
                </ReceivedSection>
              </Detail>
            </Split>
          </EditorBody>
        </EditorPanel>

        <HelpPanel>
          <TabStrip>
            <Tab $plain $wide={90}><HelpIcon />Help<button aria-label="Close help"><CloseMark /></button></Tab>
            <TabFill />
          </TabStrip>
          <HelpTools>
            <button aria-label="Show in window"><HelpWindowIcon /></button>
            <button aria-label="Show in contents"><SyncTreeIcon /></button>
            <button aria-label="Print"><PrintIcon /></button>
            <button aria-label="Add bookmark"><AddBookmarkIcon /></button>
            <MenuLine><StripButton $low aria-label="Help menu"><MenuMark /></StripButton></MenuLine>
          </HelpTools>
          <HelpBody>
            <HelpLinks>
              {helpLinks.map(([t, icon]) => <HelpLinkRow key={t}>{icon}<a href="#">{t}</a></HelpLinkRow>)}
            </HelpLinks>
            <HelpPage>
              <HelpPath><a href="#">DaVinci</a><br /><a href="#">Configurator</a><br />&gt;</HelpPath>
              <HelpHeading>Main<br />Window</HelpHeading>
              <HelpText>Please choose one of the following chapters:</HelpText>
              <Topic><Svg w={11} h={11}><path d="M0 0 11 5.500 0 11z" fill="#c4123f" /></Svg><a href="#">Scripting</a></Topic>
            </HelpPage>
          </HelpBody>
        </HelpPanel>
      </Workbench>
    </Window>
  );
}
